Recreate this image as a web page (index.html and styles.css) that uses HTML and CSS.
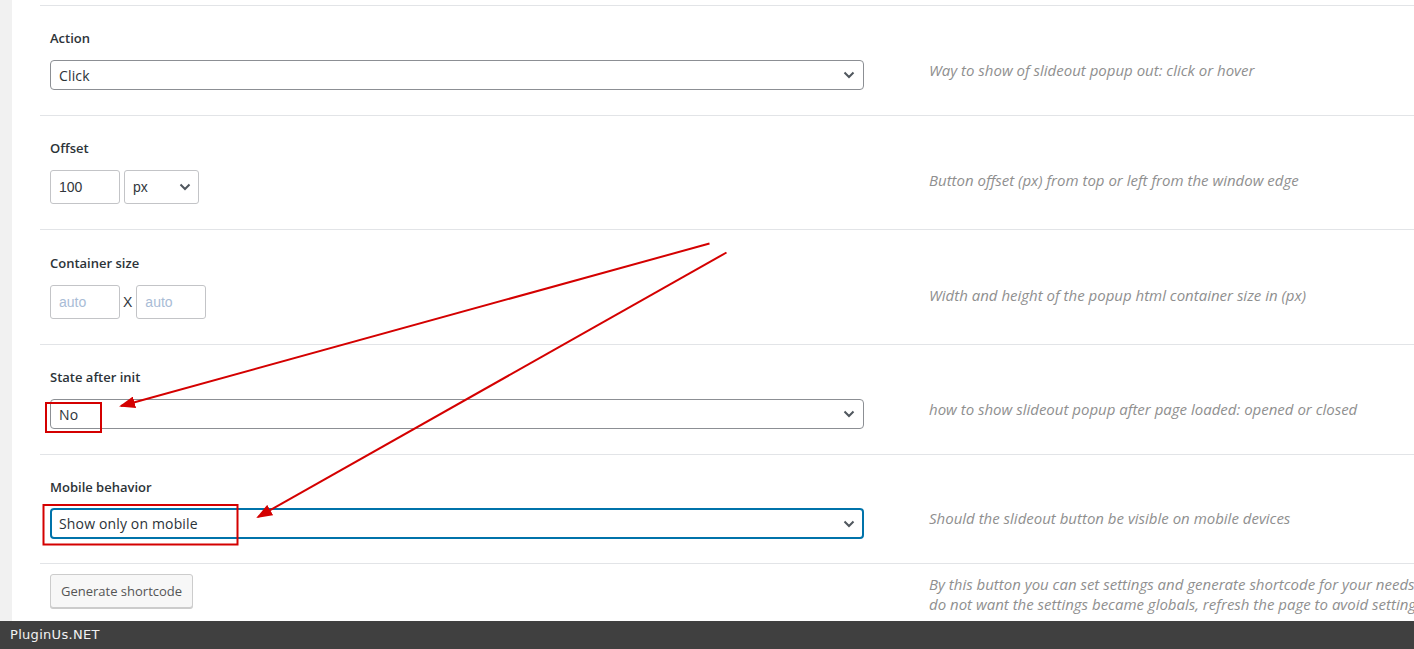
FILE: index.html
```html
<!DOCTYPE html>
<html lang="en">
<head>
<meta charset="utf-8">
<title>Slideout settings</title>
<link rel="stylesheet" href="styles.css">
</head>
<body>
<div class="page">
  <div class="gutter"></div>
  <div class="main">
    <div class="row">
      <div class="label">Action</div>
      <div class="control">
        <div class="select wide"><span>Click</span><svg class="chev" width="12" height="8" viewBox="0 0 12 8"><polyline points="1.5,1.5 6,6 10.5,1.5" fill="none" stroke="#50575e" stroke-width="2"/></svg></div>
      </div>
      <div class="desc">Way to show of slideout popup out: click or hover</div>
    </div>

    <div class="row">
      <div class="label">Offset</div>
      <div class="control inline">
        <div class="input">100</div>
        <div class="select small"><span>px</span><svg class="chev" width="12" height="8" viewBox="0 0 12 8"><polyline points="1.5,1.5 6,6 10.5,1.5" fill="none" stroke="#50575e" stroke-width="2"/></svg></div>
      </div>
      <div class="desc">Button offset (px) from top or left from the window edge</div>
    </div>

    <div class="row tall">
      <div class="label">Container size</div>
      <div class="control inline">
        <div class="input placeholder">auto</div>
        <span class="times">X</span>
        <div class="input placeholder">auto</div>
      </div>
      <div class="desc">Width and height of the popup html container size in (px)</div>
    </div>

    <div class="row">
      <div class="label">State after init</div>
      <div class="control">
        <div class="select wide"><span>No</span><svg class="chev" width="12" height="8" viewBox="0 0 12 8"><polyline points="1.5,1.5 6,6 10.5,1.5" fill="none" stroke="#50575e" stroke-width="2"/></svg></div>
      </div>
      <div class="desc">how to show slideout popup after page loaded: opened or closed</div>
    </div>

    <div class="row focused">
      <div class="label">Mobile behavior</div>
      <div class="control">
        <div class="select wide focus"><span>Show only on mobile</span><svg class="chev" width="12" height="8" viewBox="0 0 12 8"><polyline points="1.5,1.5 6,6 10.5,1.5" fill="none" stroke="#50575e" stroke-width="2"/></svg></div>
      </div>
      <div class="desc">Should the slideout button be visible on mobile devices</div>
    </div>

    <div class="row last">
      <div class="control">
        <div class="button">Generate shortcode</div>
      </div>
      <div class="desc">By this button you can set settings and generate shortcode for your needs<br>do not want the settings became globals, refresh the page to avoid settings</div>
    </div>
  </div>
</div>

<svg class="annotations" width="1414" height="649" viewBox="0 0 1414 649">
  <defs>
    <marker id="ah" markerWidth="8" markerHeight="6" refX="7" refY="3" orient="auto" markerUnits="strokeWidth">
      <polygon points="0,0 8,3 0,6" fill="#d40000"/>
    </marker>
  </defs>
  <line x1="709.5" y1="243.5" x2="121" y2="406" stroke="#d40000" stroke-width="2" marker-end="url(#ah)"/>
  <line x1="726.5" y1="252.5" x2="258" y2="517" stroke="#d40000" stroke-width="2" marker-end="url(#ah)"/>
  <rect x="46" y="403" width="55" height="29" fill="none" stroke="#d40000" stroke-width="2"/>
  <rect x="43.5" y="505" width="194" height="39.5" fill="none" stroke="#d40000" stroke-width="2"/>
</svg>

<div class="footer">PluginUs.NET</div>
</body>
</html>
```

FILE: styles.css
```css
html, body {
  margin: 0;
  padding: 0;
  background: #ffffff;
  overflow: hidden;
  width: 1414px;
  height: 649px;
}

body {
  font-family: "Open Sans", "Liberation Sans", sans-serif;
  color: #23282d;
  position: relative;
}

.page {
  display: flex;
  min-height: 649px;
}

.gutter {
  width: 12px;
  background: #f1f1f1;
  flex: none;
}

.main {
  flex: 1;
  padding: 5px 0 0 28px;
  min-width: 0;
}

.row {
  border-top: 1px solid #e2e4e7;
  padding: 22px 0 25px 10px;
  display: grid;
  grid-template-columns: 814px 1fr;
  grid-template-rows: auto auto;
  column-gap: 65px;
  row-gap: 12px;
}

.row.tall {
  padding-top: 23px;
}

.row.focused {
  row-gap: 11px;
  padding-bottom: 24px;
}

.row.last {
  padding-top: 10px;
  padding-bottom: 20px;
  grid-template-rows: auto;
}

.label {
  grid-column: 1;
  grid-row: 1;
  font-size: 13px;
  font-weight: 600;
  line-height: 20px;
  color: #2c3338;
}

.control {
  grid-column: 1;
  grid-row: 2;
}

.row.last .control,
.row.last .desc {
  grid-row: 1;
}

.control.inline {
  display: flex;
  align-items: center;
}

.desc {
  grid-column: 2;
  grid-row: 2;
  align-self: start;
  font-size: 15px;
  font-style: italic;
  line-height: 20px;
  color: #8f8f8f;
  white-space: nowrap;
}

.select {
  box-sizing: border-box;
  display: flex;
  align-items: center;
  justify-content: space-between;
  background: #fff;
  font-size: 14px;
  color: #2c3338;
}

.select.wide {
  height: 30px;
  border: 1px solid #8c8f94;
  border-radius: 4px;
  padding: 0 8px 0 8px;
}

.select.wide span {
  letter-spacing: 0.15px;
}

.select.wide.focus {
  height: 31px;
  border: 2px solid #0073aa;
  padding: 0 7px 0 7px;
}

.select.small {
  width: 75px;
  height: 34px;
  border: 1px solid #c3c4c7;
  border-radius: 3px;
  padding: 0 7px 0 8px;
  font-family: "Liberation Sans", Arial, sans-serif;
  color: #32373c;
}

.chev {
  display: block;
  flex: none;
}

.input {
  box-sizing: border-box;
  width: 70px;
  height: 34px;
  border: 1px solid #c3c4c7;
  border-radius: 3px;
  padding: 0 8px;
  display: flex;
  align-items: center;
  font-family: "Liberation Sans", Arial, sans-serif;
  font-size: 14px;
  color: #32373c;
  margin-right: 4px;
}

.input.placeholder {
  color: #a9bcd6;
  margin-right: 0;
}

.times {
  font-family: "Liberation Sans", Arial, sans-serif;
  font-size: 14px;
  color: #32373c;
  margin: 0 4px 0 3px;
}

.button {
  box-sizing: border-box;
  display: inline-flex;
  align-items: center;
  height: 34px;
  padding: 0 10px;
  border: 1px solid #cccccc;
  border-radius: 3px;
  background: #f7f7f7;
  box-shadow: 0 1px 0 #cccccc;
  font-size: 13px;
  color: #555555;
}

.annotations {
  position: absolute;
  left: 0;
  top: 0;
  pointer-events: none;
}

.footer {
  position: fixed;
  left: 0;
  right: 0;
  bottom: 0;
  height: 28px;
  background: #404040;
  color: #f2f2f2;
  font-family: "DejaVu Sans", sans-serif;
  font-size: 13px;
  letter-spacing: 0.3px;
  line-height: 28px;
  padding-left: 10px;
}
```
